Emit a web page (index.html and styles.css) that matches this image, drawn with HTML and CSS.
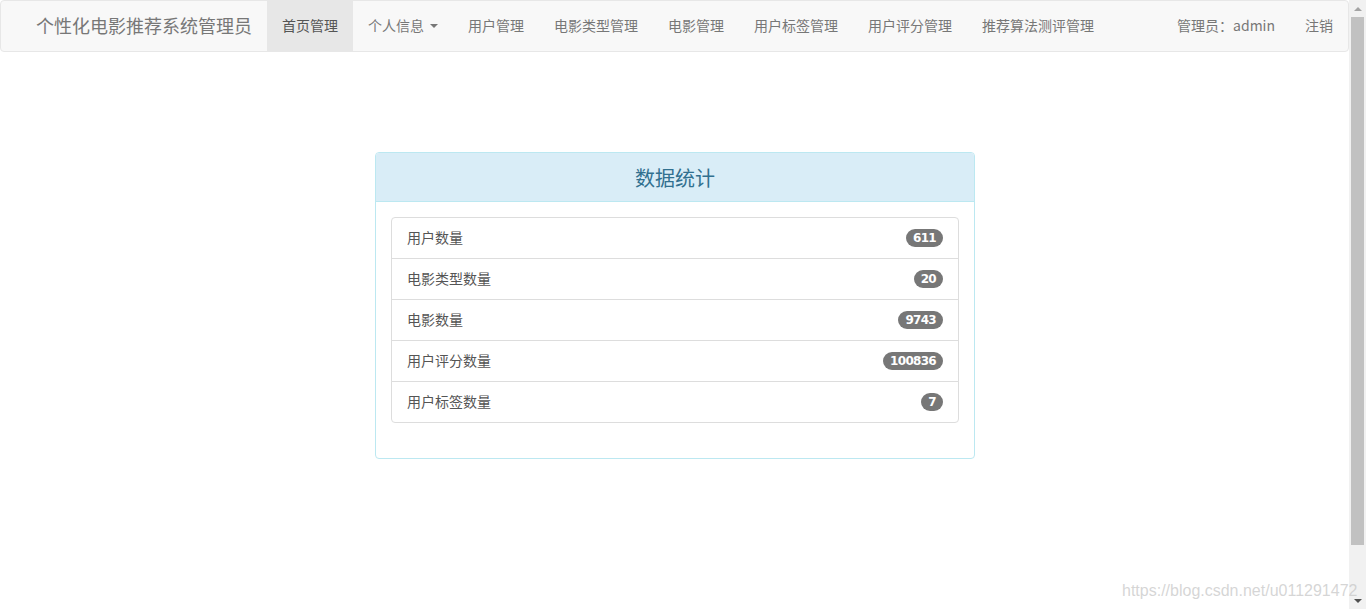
FILE: index.html
```html
<!DOCTYPE html>
<html lang="zh">
<head>
<meta charset="utf-8">
<title>个性化电影推荐系统管理员</title>
<link rel="stylesheet" href="styles.css">
</head>
<body>
<div class="screen">
  <div class="page">
    <nav class="navbar">
      <div class="navbar-left">
        <a class="brand">个性化电影推荐系统管理员</a>
        <ul class="nav">
          <li class="active"><a>首页管理</a></li>
          <li><a>个人信息 <span class="caret"></span></a></li>
          <li><a>用户管理</a></li>
          <li><a>电影类型管理</a></li>
          <li><a>电影管理</a></li>
          <li><a>用户标签管理</a></li>
          <li><a>用户评分管理</a></li>
          <li><a>推荐算法测评管理</a></li>
        </ul>
      </div>
      <ul class="nav nav-right">
        <li><a>管理员：admin</a></li>
        <li><a>注销</a></li>
      </ul>
    </nav>
    <main class="content">
      <section class="panel">
        <div class="panel-heading"><h3>数据统计</h3></div>
        <div class="panel-body">
          <ul class="list-group">
            <li class="list-item"><span>用户数量</span><span class="badge">611</span></li>
            <li class="list-item"><span>电影类型数量</span><span class="badge">20</span></li>
            <li class="list-item"><span>电影数量</span><span class="badge">9743</span></li>
            <li class="list-item"><span>用户评分数量</span><span class="badge">100836</span></li>
            <li class="list-item"><span>用户标签数量</span><span class="badge">7</span></li>
          </ul>
        </div>
      </section>
    </main>
  </div>
  <div class="scrollbar">
    <div class="arrow arrow-up"></div>
    <div class="track"><div class="thumb"></div></div>
    <div class="arrow arrow-down"></div>
  </div>
  <div class="watermark">https://blog.csdn.net/u011291472</div>
</div>
</body>
</html>
```
FILE: styles.css
```css
html, body {
  margin: 0;
  padding: 0;
  height: 100%;
  overflow: hidden;
}
body {
  font-family: "Microsoft YaHei", "Noto Sans CJK SC", "Liberation Sans", sans-serif;
  font-size: 14px;
  line-height: 20px;
  color: #333;
  background: #fff;
}
.screen {
  position: relative;
  display: flex;
  width: 1366px;
  height: 609px;
}
.page {
  width: 1349px;
  height: 609px;
}
.navbar {
  box-sizing: border-box;
  height: 52px;
  background: #f8f8f8;
  border: 1px solid #e7e7e7;
  border-radius: 4px;
  display: flex;
  justify-content: space-between;
  align-items: stretch;
}
.navbar-left {
  display: flex;
  align-items: stretch;
}
.brand {
  font-size: 18px;
  line-height: 20px;
  color: #777;
  padding: 0 15px 2px 35px;
  display: flex;
  align-items: center;
}
.nav {
  list-style: none;
  margin: 0;
  padding: 0;
  display: flex;
  align-items: stretch;
}
.nav li {
  display: flex;
}
.nav a {
  display: flex;
  align-items: center;
  padding: 0 15px 2px;
  color: #777;
  font-size: 14px;
  cursor: pointer;
}
.nav .active a {
  background: #e7e7e7;
  color: #555;
}
.caret {
  display: inline-block;
  width: 0;
  height: 0;
  margin-left: 6px;
  margin-top: 2px;
  border-top: 4px solid #777;
  border-left: 4px solid transparent;
  border-right: 4px solid transparent;
}
.content {
  display: flex;
  justify-content: center;
  padding-top: 100px;
  padding-left: 1px;
}
.panel {
  box-sizing: border-box;
  width: 600px;
  border: 1px solid #bce8f1;
  border-radius: 4px;
  background: #fff;
}
.panel-heading {
  background: #d9edf7;
  border-bottom: 1px solid #bce8f1;
  border-radius: 3px 3px 0 0;
  height: 48px;
  display: flex;
  align-items: center;
  justify-content: center;
}
.panel-heading h3 {
  margin: 2px 0 0;
  font-size: 20px;
  font-weight: normal;
  color: #31708f;
  line-height: 24px;
}
.panel-body {
  padding: 15px 15px 35px;
}
.list-group {
  list-style: none;
  margin: 0;
  padding: 0;
}
.list-item {
  display: flex;
  justify-content: space-between;
  align-items: center;
  padding: 9px 15px 11px;
  border: 1px solid #ddd;
  margin-bottom: -1px;
  color: #555;
  background: #fff;
}
.list-item:first-child {
  border-radius: 4px 4px 0 0;
}
.list-item:last-child {
  border-radius: 0 0 4px 4px;
  margin-bottom: 0;
}
.badge {
  font-family: "Verdana", "DejaVu Sans", sans-serif;
  font-size: 12px;
  font-weight: bold;
  line-height: 12px;
  color: #fff;
  background: #777;
  border-radius: 10px;
  padding: 3px 7px;
  margin-top: 1px;
  letter-spacing: -0.7px;
}
.scrollbar {
  width: 17px;
  height: 609px;
  background: #f1f1f1;
  display: flex;
  flex-direction: column;
}
.arrow {
  height: 17px;
  display: flex;
  justify-content: center;
  align-items: center;
}
.arrow-up::after {
  content: "";
  border-bottom: 4px solid #a3a3a3;
  border-left: 4px solid transparent;
  border-right: 4px solid transparent;
}
.arrow-down::after {
  content: "";
  border-top: 4px solid #505050;
  border-left: 4px solid transparent;
  border-right: 4px solid transparent;
}
.track {
  flex: 1;
  padding: 0 2px;
}
.thumb {
  height: 528px;
  background: #c1c1c1;
}
.watermark {
  position: absolute;
  left: 1122px;
  top: 581px;
  font-family: "Liberation Sans", Arial, sans-serif;
  font-size: 16px;
  line-height: 20px;
  color: rgba(200, 200, 200, 0.75);
  white-space: nowrap;
}
```
